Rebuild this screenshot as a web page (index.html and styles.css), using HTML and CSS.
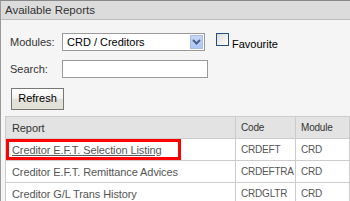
FILE: index.html
```html
<!DOCTYPE html>
<html>
<head>
<meta charset="utf-8">
<link rel="stylesheet" href="styles.css">
</head>
<body>
<div class="panel">
  <div class="panel-head">Available Reports</div>
  <div class="panel-body">
    <div class="form-row">
      <span class="label">Modules:</span>
      <div class="select">
        <span class="select-text">CRD / Creditors</span>
        <span class="select-btn">
          <svg width="9" height="6" viewBox="0 0 9 6"><path d="M1 1 L4.5 4.5 L8 1" fill="none" stroke="#4d6185" stroke-width="2"/></svg>
        </span>
      </div>
      <span class="check"></span>
      <span class="fav">Favourite</span>
    </div>
    <div class="form-row search-row">
      <span class="label">Search:</span>
      <div class="input"></div>
    </div>
    <div class="btn-row">
      <div class="button">Refresh</div>
    </div>
    <table class="grid">
      <colgroup><col class="c-report"><col class="c-code"><col class="c-mod"></colgroup>
      <thead>
        <tr><th>Report</th><th class="sm">Code</th><th class="sm">Module</th></tr>
      </thead>
      <tbody>
        <tr><td class="hl"><a class="link">Creditor E.F.T. Selection Listing</a></td><td class="sm">CRDEFT</td><td class="sm">CRD</td></tr>
        <tr><td>Creditor E.F.T. Remittance Advices</td><td class="sm">CRDEFTRA</td><td class="sm">CRD</td></tr>
        <tr><td>Creditor G/L Trans History</td><td class="sm">CRDGLTR</td><td class="sm">CRD</td></tr>
      </tbody>
    </table>
  </div>
</div>
</body>
</html>
```
FILE: styles.css
```css
html, body { margin: 0; padding: 0; }
body {
  font-family: "Liberation Sans", Arial, sans-serif;
  font-size: 11px;
  color: #333;
  background: #f5f5f5;
  width: 350px;
  height: 201px;
  overflow: hidden;
}
.panel {
  border-left: 1px solid #999;
  border-top: 1px solid #888;
  height: 200px;
  background: #f5f5f5;
}
.panel-head {
  height: 18px;
  line-height: 18px;
  background: #dcdcdc;
  border-bottom: 1px solid #bbb;
  padding-left: 4px;
  font-size: 11.5px;
  color: #333;
}
.panel-body {
  padding: 12px 0 0 4px;
}
.form-row {
  display: flex;
  align-items: center;
  height: 19px;
}
.label {
  width: 52px;
  padding-left: 5px;
}
.select {
  width: 141px;
  height: 16px;
  border: 1px solid #999;
  background: #fff;
  display: flex;
  align-items: center;
  justify-content: space-between;
  color: #000;
}
.select-text { padding-left: 4px; }
.select-btn {
  width: 13px;
  height: 14px;
  margin-right: 1px;
  background: linear-gradient(#c5d6fb, #b0c6f4);
  border: 1px solid #a9bde8;
  box-sizing: border-box;
  display: flex;
  align-items: center;
  justify-content: center;
}
.check {
  width: 11px;
  height: 11px;
  margin-left: 11px;
  margin-top: -5px;
  border: 1px solid #1c5180;
  background: linear-gradient(135deg, #dcdcd7, #fff);
}
.fav {
  margin-left: 3px;
  margin-top: 4px;
  color: #000;
}
.search-row { margin-top: 8px; }
.input {
  width: 144px;
  height: 16px;
  border: 1px solid #999;
  background: #fff;
}
.btn-row { margin-top: 10px; padding-left: 6px; }
.button {
  width: 51px;
  height: 20px;
  border: 1px solid #777;
  background: linear-gradient(#fff 0%, #f1f1ee 50%, #e2e1d8 51%, #e2e1d8 100%);
  text-align: center;
  line-height: 19px;
  color: #000;
}
.grid {
  margin-top: 6px;
  border-collapse: collapse;
  table-layout: fixed;
  width: 344px;
  font-size: 11px;
  letter-spacing: -0.1px;
}
.c-report { width: 230px; }
.c-code { width: 60px; }
.c-mod { width: 54px; }
.grid th, .grid td {
  border: 1px solid #ccc;
  height: 21px;
  padding: 0 0 0 6px;
  text-align: left;
  font-weight: normal;
  color: #555;
  white-space: nowrap;
  overflow: hidden;
}
.grid .sm { font-size: 10px; letter-spacing: -0.2px; padding-left: 5px; }
.grid th { background: #e3e3e3; color: #333; }
.grid td { background: #fff; }
.hl { position: relative; }
.link { color: #555; text-decoration: underline; }
.hl::after {
  content: "";
  position: absolute;
  left: 0;
  top: 0;
  width: 169px;
  height: 15px;
  border: 3px solid #f00;
}
```
